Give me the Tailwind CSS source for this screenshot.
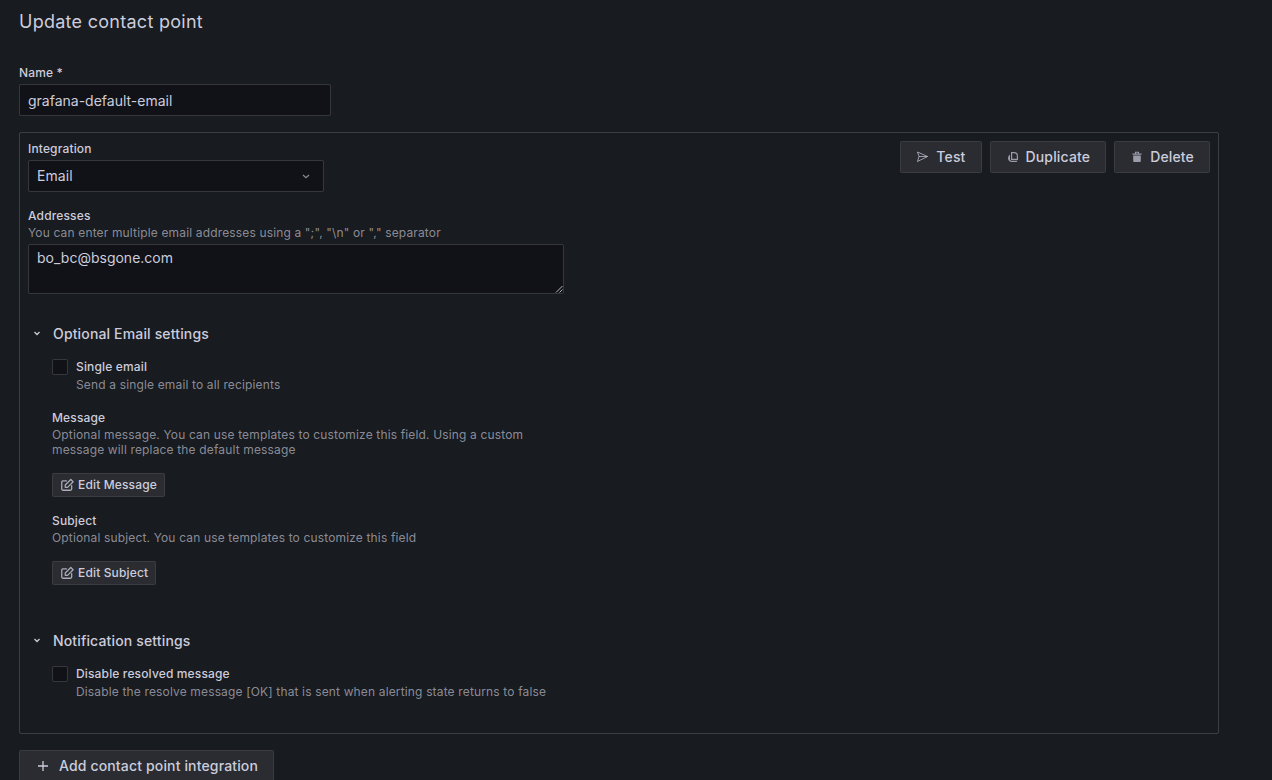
<!DOCTYPE html>
<html lang="en">
<head>
<meta charset="utf-8">
<title>Update contact point</title>
<script src="https://cdn.jsdelivr.net/npm/@tailwindcss/browser@4"></script>
</head>
<body class="bg-[#181b1f] text-[#ccccdc] font-['Inter',sans-serif] tracking-[0.15px] h-[780px] w-[1272px] overflow-hidden">
<main class="pl-[19px] w-[1219px]">
  <h1 class="text-[18px] leading-[22px] pt-[11px] h-[65px] font-normal tracking-[0.27px]">Update contact point</h1>
  <label class="block text-[12px] leading-[16px] font-medium h-[19px]">Name *</label>
  <div class="w-[312px] h-[32px] bg-[#111217] border border-[#ccccdc]/20 rounded-[2px] px-2 pt-[1px] text-[14px] tracking-normal flex items-center">grafana-default-email</div>

  <section class="relative mt-4 border border-[#ccccdc]/20 rounded-[2px] h-[602px] pl-2 pt-2">
    <div class="absolute top-2 right-2 flex gap-2">
      <button class="h-[32px] px-[15px] pb-[1px] flex items-center gap-[6px] bg-[#2a2c32] border border-[#ccccdc]/[0.1] rounded-[2px] text-[14px] font-medium text-[#ccccdc]">
        <svg class="w-[14px] h-[14px]" viewBox="0 0 14 14" fill="none" stroke="#ccccdc" stroke-opacity="0.7" stroke-width="1" stroke-linejoin="round"><path d="M1.500 2 11.500 6.500 1.500 11.500 3 6.500Z"/><path d="M3 6.500h8.500"/></svg>
        Test
      </button>
      <button class="h-[32px] px-[15px] pb-[1px] flex items-center gap-[6px] bg-[#2a2c32] border border-[#ccccdc]/[0.1] rounded-[2px] text-[14px] font-medium text-[#ccccdc]">
        <svg class="w-[14px] h-[14px]" viewBox="0 0 14 14" fill="#ccccdc" fill-opacity="0.7"><path d="M4 4.500a4.500 4.500 0 0 0-2 3.700C2 10.500 3.800 12 6 12h3.500c1 0 1.800-.5 2.200-1.300H5.500a1.500 1.500 0 0 1-1.500-1.500Z"/><path fill-rule="evenodd" d="M5 2h3a4 4 0 0 1 4 4v4H5Zm1.200 1.200v5.600h4.600V6A2.800 2.800 0 0 0 8 3.200Z"/></svg>
        Duplicate
      </button>
      <button class="h-[32px] px-[15px] pb-[1px] flex items-center gap-[6px] bg-[#2a2c32] border border-[#ccccdc]/[0.1] rounded-[2px] text-[14px] font-medium text-[#ccccdc]">
        <svg class="w-[14px] h-[14px]" viewBox="0 0 14 14" fill="#ccccdc" fill-opacity="0.7"><path fill-rule="evenodd" d="M5 1.800h4v1.800h2.500v1.200h-9V3.600H5Zm1 .9v.9h2v-.9Z"/><path d="M3.200 5.600h7.600V11a1 1 0 0 1-1 1H4.200a1 1 0 0 1-1-1Z"/></svg>
        Delete
      </button>
    </div>

    <label class="block text-[12px] leading-[16px] font-medium h-[19px]">Integration</label>
    <div class="w-[296px] h-[32px] bg-[#111217] border border-[#ccccdc]/20 rounded-[2px] px-2 pb-[1px] text-[14px] tracking-[0.05px] flex items-center justify-between">
      <span>Email</span>
      <svg class="w-4 h-4 mr-[1px]" viewBox="0 0 16 16" fill="none" stroke="#ccccdc" stroke-opacity="0.65" stroke-width="1.2"><path d="M5 7l3 2.700L11 7"/></svg>
    </div>

    <label class="block mt-4 text-[12px] leading-[16px] font-medium">Addresses</label>
    <p class="text-[12px] leading-[16px] h-[20px] pt-[1px] text-[#ccccdc]/65">You can enter multiple email addresses using a ";", "\n" or "," separator</p>
    <div class="relative w-[536px] h-[50px] bg-[#111217] border border-[#ccccdc]/20 rounded-[2px] px-2 pt-[3px] text-[14px] leading-[20px] tracking-normal">
      bo_bc@bsgone.com
      <svg class="absolute right-0 bottom-0 w-[8px] h-[8px]" viewBox="0 0 8 8" fill="none" stroke="#ccccdc" stroke-width="0.9"><path d="M1 7.500 7.500 1M4.500 7.500 7.500 4.500"/></svg>
    </div>

    <div class="mt-[29px] mb-[16px] flex items-center h-[20px] text-[14px] font-medium">
      <svg class="w-4 h-4 mr-[8px] ml-[1px]" viewBox="0 0 16 16" fill="none" stroke="#ccccdc" stroke-width="1.3"><path d="M5.500 7 8 9.500 10.500 7"/></svg>
      Optional Email settings
    </div>

    <div class="ml-6 flex gap-2">
      <span class="block w-4 h-4 bg-[#111217] border border-[#ccccdc]/20 rounded-[2px]"></span>
      <div>
        <div class="text-[12px] leading-[16px] font-medium h-[18px]">Single email</div>
        <div class="text-[12px] leading-[16px] text-[#ccccdc]/65">Send a single email to all recipients</div>
      </div>
    </div>

    <div class="ml-6 mt-[17px] w-[500px]">
      <div class="text-[12px] leading-[16px] font-medium h-[17px]">Message</div>
      <p class="text-[12px] leading-[15px] text-[#ccccdc]/65">Optional message. You can use templates to customize this field. Using a custom message will replace the default message</p>
      <button class="mt-[16px] h-[24px] px-[7px] flex items-center gap-1 bg-[#2a2c32] border border-[#ccccdc]/[0.1] rounded-[2px] text-[12px] font-medium text-[#ccccdc]">
        <svg class="w-[14px] h-[14px]" viewBox="0 0 24 24" fill="none" stroke="#ccccdc" stroke-opacity="0.8" stroke-width="2.2" stroke-linejoin="round" stroke-linecap="round"><path d="M20 13v6a2 2 0 0 1-2 2H5a2 2 0 0 1-2-2V7a2 2 0 0 1 2-2h6"/><path d="M9 16v-4L18.500 2.500 22.500 6.500 13 16Z"/></svg>
        Edit Message
      </button>

      <div class="mt-[16px] text-[12px] leading-[16px] font-medium h-[17px]">Subject</div>
      <p class="text-[12px] leading-[15px] text-[#ccccdc]/65">Optional subject. You can use templates to customize this field</p>
      <button class="mt-[16px] h-[24px] px-[7px] flex items-center gap-1 bg-[#2a2c32] border border-[#ccccdc]/[0.1] rounded-[2px] text-[12px] font-medium text-[#ccccdc]">
        <svg class="w-[14px] h-[14px]" viewBox="0 0 24 24" fill="none" stroke="#ccccdc" stroke-opacity="0.8" stroke-width="2.2" stroke-linejoin="round" stroke-linecap="round"><path d="M20 13v6a2 2 0 0 1-2 2H5a2 2 0 0 1-2-2V7a2 2 0 0 1 2-2h6"/><path d="M9 16v-4L18.500 2.500 22.500 6.500 13 16Z"/></svg>
        Edit Subject
      </button>
    </div>

    <div class="mt-[45px] mb-[16px] flex items-center h-[20px] text-[14px] font-medium">
      <svg class="w-4 h-4 mr-[8px] ml-[1px]" viewBox="0 0 16 16" fill="none" stroke="#ccccdc" stroke-width="1.3"><path d="M5.500 7 8 9.500 10.500 7"/></svg>
      Notification settings
    </div>

    <div class="ml-6 flex gap-2">
      <span class="block w-4 h-4 bg-[#111217] border border-[#ccccdc]/20 rounded-[2px]"></span>
      <div>
        <div class="text-[12px] leading-[16px] font-medium h-[18px]">Disable resolved message</div>
        <div class="text-[12px] leading-[16px] text-[#ccccdc]/65">Disable the resolve message [OK] that is sent when alerting state returns to false</div>
      </div>
    </div>
  </section>

  <button class="mt-4 h-[32px] px-[15px] pb-[1px] flex items-center gap-2 bg-[#2a2c32] border border-[#ccccdc]/[0.1] rounded-[2px] text-[14px] font-medium text-[#ccccdc]">
    <svg class="w-4 h-4" viewBox="0 0 16 16" fill="none" stroke="#ccccdc" stroke-width="1.3"><path d="M8 3v10M3 8h10"/></svg>
    Add contact point integration
  </button>
</main>
</body>
</html>
